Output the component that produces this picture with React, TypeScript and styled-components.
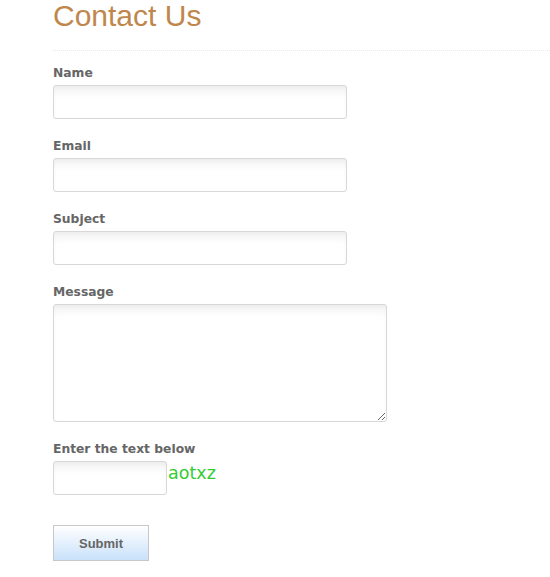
import styled, { createGlobalStyle } from "styled-components";

const GlobalStyle = createGlobalStyle`
  html, body {
    margin: 0;
    padding: 0;
    background: #fff;
  }
  body {
    font-family: "DejaVu Sans", Verdana, sans-serif;
  }
`;

const Page = styled.section`
  padding: 0 0 0 53px;
  overflow: hidden;
`;

const Title = styled.h1`
  margin: 0;
  font-family: "Liberation Sans", Arial, sans-serif;
  font-weight: normal;
  font-size: 30px;
  line-height: 32px;
  color: #c0874d;
`;

const Divider = styled.div`
  margin-top: 18px;
  border-top: 1px dotted #e8e8e8;
`;

const Form = styled.form`
  display: flex;
  flex-direction: column;
  padding-top: 15px;
`;

const Field = styled.div`
  display: flex;
  flex-direction: column;
  gap: 5px;
  margin-bottom: 20px;
`;

const Label = styled.label`
  font-size: 12.3px;
  font-weight: bold;
  color: #666;
  line-height: 14px;
`;

const inputBase = `
  box-sizing: border-box;
  border: 1px solid #d8d8d8;
  border-radius: 3px;
  background: linear-gradient(#f3f3f3, #fff 12px);
  box-shadow: inset 0 2px 4px rgba(0, 0, 0, 0.03);
  font-family: inherit;
  font-size: 13px;
  outline: none;
`;

const TextInput = styled.input<{ $width: number }>`
  ${inputBase}
  width: ${(p) => p.$width}px;
  height: 34px;
`;

const MessageArea = styled.textarea`
  ${inputBase}
  width: 334px;
  height: 118px;
  resize: both;
`;

const CaptchaRow = styled.div`
  display: flex;
  align-items: center;
  gap: 1px;
`;

const CaptchaText = styled.span`
  font-family: "DejaVu Sans", Verdana, sans-serif;
  font-size: 17.5px;
  color: #33cc33;
  margin-top: -11px;
`;

const SubmitButton = styled.button`
  box-sizing: border-box;
  width: 96px;
  height: 36px;
  margin-top: 10px;
  border: 1px solid #c8c8c8;
  background: linear-gradient(#ffffff, #c9e1fa);
  font-family: "Liberation Sans", Arial, sans-serif;
  font-weight: bold;
  font-size: 13px;
  color: #666;
  cursor: pointer;
`;

const App = () => {
  return (
    <Page>
      <GlobalStyle />
      <Title>Contact Us</Title>
      <Divider />
      <Form onSubmit={(e) => e.preventDefault()}>
        <Field>
          <Label>Name</Label>
          <TextInput $width={294} type="text" />
        </Field>
        <Field>
          <Label>Email</Label>
          <TextInput $width={294} type="text" />
        </Field>
        <Field>
          <Label>Subject</Label>
          <TextInput $width={294} type="text" />
        </Field>
        <Field>
          <Label>Message</Label>
          <MessageArea />
        </Field>
        <Field>
          <Label>Enter the text below</Label>
          <CaptchaRow>
            <TextInput $width={114} type="text" />
            <CaptchaText>aotxz</CaptchaText>
          </CaptchaRow>
        </Field>
        <div>
          <SubmitButton type="submit">Submit</SubmitButton>
        </div>
      </Form>
    </Page>
  );
};

export default App;
